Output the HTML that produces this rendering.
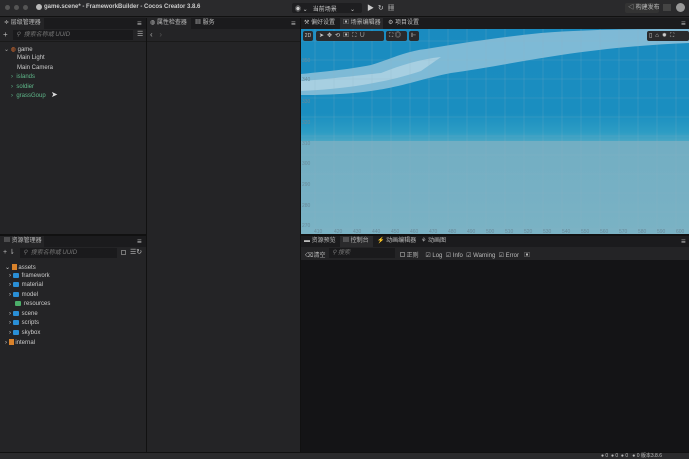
<!DOCTYPE html><html><head><meta charset="utf-8"><style>
*{margin:0;padding:0;box-sizing:border-box}
body{width:689px;height:459px;overflow:hidden;background:#242426;font-family:"Liberation Sans","Noto Sans CJK SC",sans-serif;font-size:6px;color:#ccc;position:relative}
.a{position:absolute;white-space:nowrap}
.tab{position:absolute;height:11px;line-height:11px;font-size:6px;color:#bbb}
.tr{font-size:6px;color:#ccc}
.g{color:#5fb88a}
.fold{display:inline-block;width:6px;height:5px;background:#2a8fd6;border-radius:1px;vertical-align:-1px;margin-right:3px}
</style></head><body>
<div class="a" style="left:0;top:0;width:689px;height:17px;background:#2a2a2c;border-bottom:1px solid #111"></div>
<div class="a" style="left:5px;top:5px;width:5px;height:5px;border-radius:50%;background:#555"></div>
<div class="a" style="left:14px;top:5px;width:5px;height:5px;border-radius:50%;background:#555"></div>
<div class="a" style="left:23px;top:5px;width:5px;height:5px;border-radius:50%;background:#555"></div>
<div class="a" style="left:36px;top:4px;width:6px;height:6px;border-radius:50%;background:#bbb"></div>
<div class="a" style="left:44px;top:4px;font-size:6px;font-weight:bold;color:#ccc">game.scene* - FrameworkBuilder - Cocos Creator 3.8.6</div>
<div class="a" style="left:292px;top:3px;width:70px;height:10px;background:#1e1e20;border-radius:2px"></div>
<div class="a" style="left:295px;top:4px;color:#ccc">◉ ⌄ &nbsp;&nbsp;当前场景 &nbsp;&nbsp;&nbsp;&nbsp;&nbsp;&nbsp;&nbsp;⌄</div>
<div class="a" style="left:367px;top:3px;color:#ccc;font-size:7px">▶ &nbsp;↻ &nbsp;▦</div>
<div class="a" style="left:625px;top:3px;width:34px;height:10px;background:#333;border-radius:2px;color:#bbb;padding-left:3px;line-height:10px">◁ 构建发布</div>
<div class="a" style="left:663px;top:4px;width:8px;height:7px;background:#444"></div>
<div class="a" style="left:676px;top:3px;width:9px;height:9px;border-radius:50%;background:#999"></div>
<div class="a" style="left:0;top:18px;width:146px;height:216px;background:#242426"></div>
<div class="a" style="left:0;top:18px;width:146px;height:11px;background:#1b1b1d"></div>
<div class="tab" style="left:0;top:18px;width:44px;background:#242426;padding-left:4px">≑ 层级管理器</div>
<div class="a" style="left:137px;top:19px;color:#bbb;font-size:8px">≡</div>
<div class="a" style="left:0;top:29px;width:146px;height:13px;background:#242426;border-bottom:1px solid #1a1a1a"></div>
<div class="a" style="left:3px;top:30px;color:#bbb;font-size:8px">+</div>
<div class="a" style="left:13px;top:30px;width:120px;height:10px;background:#1a1a1c;color:#777;font-style:italic;padding-left:3px;line-height:10px">⚲ &nbsp;搜索名称或 UUID</div>
<div class="a" style="left:137px;top:30px;color:#bbb;font-size:7px">☰</div>
<div class="a tr" style="left:4px;top:46px"><span style="color:#aaa">⌄</span> <span style="color:#e07030">◍</span> game</div>
<div class="a tr" style="left:17px;top:55px">Main Light</div>
<div class="a tr" style="left:17px;top:65px">Main Camera</div>
<div class="a tr g" style="left:11px;top:74px">› &nbsp;islands</div>
<div class="a tr g" style="left:11px;top:84px">› &nbsp;soldier</div>
<div class="a tr g" style="left:11px;top:93px">› &nbsp;grassGoup</div>
<div class="a" style="left:51px;top:90px;color:#ddd;font-size:8px">➤</div>
<div class="a" style="left:0;top:234px;width:146px;height:2px;background:#111"></div>
<div class="a" style="left:0;top:236px;width:146px;height:11px;background:#1b1b1d"></div>
<div class="tab" style="left:0;top:236px;width:44px;background:#242426;padding-left:4px">▤ 资源管理器</div>
<div class="a" style="left:137px;top:237px;color:#bbb;font-size:8px">≡</div>
<div class="a" style="left:3px;top:248px;color:#bbb;font-size:7px">+ ⇂</div>
<div class="a" style="left:20px;top:248px;width:97px;height:10px;background:#1a1a1c;color:#777;font-style:italic;padding-left:3px;line-height:10px">⚲ &nbsp;搜索名称或 UUID</div>
<div class="a" style="left:121px;top:250px;width:5px;height:5px;border:1px solid #777"></div>
<div class="a" style="left:130px;top:248px;color:#bbb;font-size:7px">☰↻</div>
<div class="a tr" style="left:5px;top:264px">⌄ <span style="display:inline-block;width:5px;height:6px;background:#d9822b;vertical-align:-1px"></span> assets</div>
<div class="a tr" style="left:9px;top:273px">› <span class="fold"></span>framework</div>
<div class="a tr" style="left:9px;top:282px">› <span class="fold"></span>material</div>
<div class="a tr" style="left:9px;top:292px">› <span class="fold"></span>model</div>
<div class="a tr" style="left:15px;top:301px"><span class="fold" style="background:#4caf6a"></span>resources</div>
<div class="a tr" style="left:9px;top:311px">› <span class="fold"></span>scene</div>
<div class="a tr" style="left:9px;top:320px">› <span class="fold"></span>scripts</div>
<div class="a tr" style="left:9px;top:330px">› <span class="fold"></span>skybox</div>
<div class="a tr" style="left:5px;top:339px">› <span style="display:inline-block;width:5px;height:6px;background:#d9822b;vertical-align:-1px"></span> internal</div>
<div class="a" style="left:146px;top:18px;width:1px;height:434px;background:#111"></div>
<div class="a" style="left:147px;top:18px;width:153px;height:11px;background:#1b1b1d"></div>
<div class="tab" style="left:147px;top:18px;width:44px;background:#242426;padding-left:3px">◍ 属性检查器</div>
<div class="tab" style="left:195px;top:18px">▦ 服务</div>
<div class="a" style="left:291px;top:19px;color:#bbb;font-size:8px">≡</div>
<div class="a" style="left:147px;top:29px;width:153px;height:13px;border-bottom:1px solid #1a1a1a"></div>
<div class="a" style="left:150px;top:30px;color:#aaa;font-size:8px">‹ &nbsp;&nbsp;<span style="color:#555">›</span></div>
<div class="a" style="left:300px;top:18px;width:1px;height:434px;background:#111"></div>
<div class="a" style="left:301px;top:18px;width:388px;height:11px;background:#1b1b1d"></div>
<div class="tab" style="left:304px;top:18px">⚒ 偏好设置</div>
<div class="tab" style="left:340px;top:18px;width:43px;background:#2a2a2c;padding-left:3px">▣ 场景编辑器</div>
<div class="tab" style="left:388px;top:18px">⚙ 项目设置</div>
<div class="a" style="left:681px;top:19px;color:#bbb;font-size:8px">≡</div>
<div class="a" style="left:301px;top:29px;width:388px;height:112px;background:linear-gradient(180deg,#1a8bc0 0%,#1a8ec0 75%,#2c9cc4 92%,#4aa6c4 100%)"></div>
<div class="a" style="left:301px;top:141px;width:388px;height:93px;background:linear-gradient(180deg,#72aec3 0%,#7ab2c4 100%)"></div>
<svg class="a" style="left:301px;top:29px" width="388" height="205">
<path d="M0 45 C30 42 50 40 70 36 C90 30 105 22 125 20 C160 14 200 8 240 4 C290 0 340 0 388 0 L388 14 C340 16 300 20 260 26 C220 32 180 40 150 44 C120 50 100 58 70 62 C40 66 15 66 0 66Z" fill="#a9cde0" opacity="0.7"/>
<path d="M0 52 C30 50 60 46 80 44 C100 36 120 30 140 28 L120 42 C90 52 50 60 0 62Z" fill="#cfe3ec" opacity="0.5"/>
<g stroke="#8fb3c3" stroke-opacity="0.35" stroke-width="0.6">
<path d="M14 0V205M33 0V205M52 0V205M71 0V205M90 0V205M109 0V205M128 0V205M147 0V205M166 0V205M185 0V205M204 0V205M223 0V205M242 0V205M261 0V205M280 0V205M299 0V205M318 0V205M337 0V205M356 0V205M375 0V205"/>
<path d="M0 12H388M0 31H388M0 50H388M0 69H388M0 88H388M0 107H388M0 126H388M0 145H388M0 164H388M0 183H388M0 200H388"/>
</g>
<g font-size="5" fill="#6a8a99" font-family="Liberation Sans">
<text x="1" y="33">350</text><text x="1" y="52">340</text><text x="1" y="74">330</text><text x="1" y="95">320</text><text x="1" y="116">310</text><text x="1" y="136">300</text><text x="1" y="157">290</text><text x="1" y="178">280</text><text x="1" y="198">270</text>
<text x="13" y="204">410</text><text x="33" y="204">420</text><text x="52" y="204">430</text><text x="71" y="204">440</text><text x="90" y="204">450</text><text x="109" y="204">460</text><text x="128" y="204">470</text><text x="147" y="204">480</text><text x="166" y="204">490</text><text x="185" y="204">500</text><text x="204" y="204">510</text><text x="223" y="204">520</text><text x="242" y="204">530</text><text x="261" y="204">540</text><text x="280" y="204">550</text><text x="299" y="204">560</text><text x="318" y="204">570</text><text x="337" y="204">580</text><text x="356" y="204">590</text><text x="375" y="204">600</text>
</g>
</svg>
<div class="a" style="left:303px;top:31px;width:10px;height:10px;background:#2a2a2c;border-radius:2px;color:#ccc;font-size:5px;line-height:10px;text-align:center">2D</div>
<div class="a" style="left:316px;top:31px;width:68px;height:10px;background:#2a2a2c;border-radius:2px;color:#ccc;font-size:6px;line-height:10px;letter-spacing:3px;padding-left:3px">➤✥⟲▣⛶∪</div>
<div class="a" style="left:386px;top:31px;width:21px;height:10px;background:#2a2a2c;border-radius:2px;color:#ccc;font-size:6px;line-height:10px;padding-left:3px">⛶ ◎</div>
<div class="a" style="left:409px;top:31px;width:10px;height:10px;background:#2a2a2c;border-radius:2px;color:#ccc;font-size:6px;line-height:10px;padding-left:2px">⊩</div>
<div class="a" style="left:647px;top:31px;width:42px;height:10px;background:#2a2a2c;border-radius:2px;color:#ccc;font-size:6px;line-height:10px;letter-spacing:3px;padding-left:2px">▯⌂✹⛶</div>
<div class="a" style="left:301px;top:234px;width:388px;height:2px;background:#111"></div>
<div class="a" style="left:301px;top:236px;width:388px;height:11px;background:#1b1b1d"></div>
<div class="tab" style="left:304px;top:236px">▬ 资源预览</div>
<div class="tab" style="left:340px;top:236px;width:33px;background:#2a2a2c;padding-left:3px">▤ 控制台</div>
<div class="tab" style="left:377px;top:236px">⚡ 动画编辑器</div>
<div class="tab" style="left:421px;top:236px">⚘ 动画图</div>
<div class="a" style="left:681px;top:237px;color:#bbb;font-size:8px">≡</div>
<div class="a" style="left:301px;top:247px;width:388px;height:13px;background:#242426"></div>
<div class="a" style="left:305px;top:250px;color:#bbb">⌫清空</div>
<div class="a" style="left:329px;top:248px;width:66px;height:10px;background:#1a1a1c;color:#777;font-style:italic;padding-left:3px;line-height:10px">⚲ 搜索</div>
<div class="a" style="left:400px;top:250px;color:#bbb"><span style="display:inline-block;width:5px;height:5px;border:1px solid #777"></span> 正则 &nbsp;&nbsp;&nbsp;☑ Log &nbsp;☑ Info &nbsp;☑ Warning &nbsp;☑ Error &nbsp;&nbsp;▣</div>
<div class="a" style="left:301px;top:260px;width:388px;height:192px;background:#141416"></div>
<div class="a" style="left:0;top:452px;width:689px;height:7px;background:#2a2a2c;border-top:1px solid #111"></div>
<div class="a" style="left:601px;top:452px;font-size:5px;color:#bbb">● 0 &nbsp;● 0 &nbsp;● 0 &nbsp;&nbsp;● 0 版本3.8.6</div>
</body></html>
